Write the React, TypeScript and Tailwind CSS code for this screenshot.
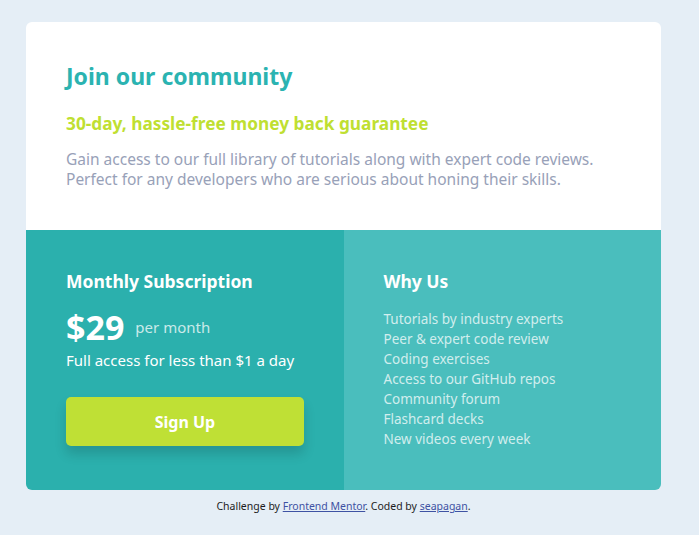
const perks = [
  "Tutorials by industry experts",
  "Peer & expert code review",
  "Coding exercises",
  "Access to our GitHub repos",
  "Community forum",
  "Flashcard decks",
  "New videos every week",
];

const App = () => {
  return (
    <main className="min-h-screen w-full bg-[#e5eef6] pt-[22px] font-['Noto_Sans',sans-serif]">
      <div className="ml-[26px] w-[635px] overflow-hidden rounded-md">
        <section className="bg-white px-10 pt-10 pb-[41px]">
          <h1 className="text-[23px] leading-[28px] font-bold text-[#2bb3b1]">
            Join our community
          </h1>
          <h2 className="mt-[22px] text-[17.3px] leading-[24px] font-bold text-[#bfdf32]">
            30-day, hassle-free money back guarantee
          </h2>
          <p className="mt-[13px] text-[15.5px] leading-[20px] text-[#98a1b8]">
            Gain access to our full library of tutorials along with expert code reviews.
            <br />
            Perfect for any developers who are serious about honing their skills.
          </p>
        </section>
        <div className="grid grid-cols-2">
          <section className="bg-[#2bb0ad] px-10 pt-10 pb-[41px] text-white">
            <h3 className="text-[17.5px] leading-[22px] font-bold">Monthly Subscription</h3>
            <div className="mt-[16px] flex items-center gap-[11px]">
              <span className="text-[34px] leading-[38px] font-bold">$29</span>
              <span className="text-[15px] text-white/75">per month</span>
            </div>
            <p className="mt-[4px] text-[15px] leading-[20px]">Full access for less than $1 a day</p>
            <button className="mt-[27px] h-[49px] w-[238px] rounded-[5px] bg-[#bfe035] text-[16px] font-bold text-white shadow-[0_8px_12px_rgba(0,0,0,0.15)]">
              Sign Up
            </button>
          </section>
          <section className="bg-[#4abebd] px-10 pt-10 pb-[41px] text-white">
            <h3 className="text-[17.5px] leading-[22px] font-bold">Why Us</h3>
            <ul className="mt-[17px] text-[13.5px] leading-[20px] text-white/75">
              {perks.map((p) => (
                <li key={p}>{p}</li>
              ))}
            </ul>
          </section>
        </div>
      </div>
      <footer className="mt-[9px] w-[687px] text-center text-[10.5px] leading-[14px] text-[#1c1c1c]">
        Challenge by{" "}
        <a href="#" className="text-[#3e52a3] underline">
          Frontend Mentor
        </a>
        . Coded by{" "}
        <a href="#" className="text-[#3e52a3] underline">
          seapagan
        </a>
        .
      </footer>
    </main>
  );
};

export default App;
